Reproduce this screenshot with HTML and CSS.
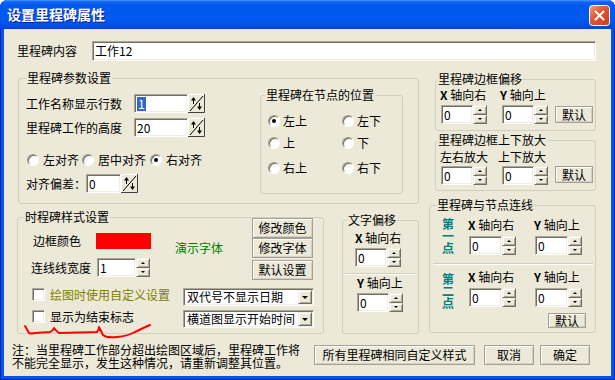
FILE: index.html
```html
<!DOCTYPE html>
<html lang="zh-CN">
<head>
    <meta charset="UTF-8">
    <meta name="viewport" content="width=device-width, initial-scale=1.0">
    <title>设置里程碑属性</title>
    <link rel="stylesheet" href="styles.css">
</head>
<body>
    <svg class="defs" width="0" height="0">
        <symbol id="bigspin" viewBox="0 0 17 19">
            <rect x="0" y="0" width="17" height="19" fill="#ece9d8"/>
            <path d="M0.5 18V0.5H16" fill="none" stroke="#fff"/>
            <path d="M16.5 0V18.5H0" fill="none" stroke="#404040"/>
            <path d="M2 17L15 2" stroke="#000" fill="none"/>
            <path d="M5.5 4V10" stroke="#000"/>
            <path d="M3 6.5L5.5 3L8 6.5Z" fill="#000"/>
            <path d="M11.5 9V15" stroke="#000"/>
            <path d="M9 12.5L11.5 16L14 12.5Z" fill="#000"/>
        </symbol>
    </svg>

    <div class="window">
        <div class="titlebar">
            <span class="title">设置里程碑属性</span>
            <svg class="close" width="21" height="21" viewBox="0 0 21 21">
                <defs>
                    <linearGradient id="closeGrad" x1="0" y1="0" x2="1" y2="1">
                        <stop offset="0" stop-color="#f1a287"/>
                        <stop offset="0.4" stop-color="#e05a35"/>
                        <stop offset="1" stop-color="#c53d17"/>
                    </linearGradient>
                </defs>
                <rect x="0.5" y="0.5" width="20" height="20" rx="3" fill="url(#closeGrad)" stroke="#fff"/>
                <path d="M6 6L15 15M15 6L6 15" stroke="#fff" stroke-width="2"/>
            </svg>
        </div>

        <div class="client">
            <div class="content-row">
                <span class="content-label">里程碑内容</span>
                <div class="field content-field">工作12</div>
            </div>

            <div class="main">
                <div class="col-left">
                    <div class="group g-params">
                        <div class="group-title">里程碑参数设置</div>
                        <div class="params-body">
                            <div class="params-form">
                                <div class="form-row first">
                                    <span class="lbl-lines">工作名称显示行数</span>
                                    <div class="field num-field"><span class="sel">1</span></div>
                                    <svg class="bigspin"><use href="#bigspin"/></svg>
                                </div>
                                <div class="form-row second">
                                    <span class="lbl-lines">里程碑工作的高度</span>
                                    <div class="field num-field">20</div>
                                    <svg class="bigspin"><use href="#bigspin"/></svg>
                                </div>
                                <div class="align-row">
                                    <span class="radio"></span><span class="opt">左对齐</span>
                                    <span class="radio r2"></span><span class="opt">居中对齐</span>
                                    <span class="radio r3 checked"></span><span class="opt">右对齐</span>
                                </div>
                                <div class="form-row offset">
                                    <span class="lbl-offset">对齐偏差：</span>
                                    <div class="field off-field">0</div>
                                    <svg class="bigspin"><use href="#bigspin"/></svg>
                                </div>
                            </div>

                            <div class="group g-pos">
                                <div class="group-title">里程碑在节点的位置</div>
                                <div class="pos-grid">
                                    <div class="pos"><span class="radio checked"></span>左上</div>
                                    <div class="pos"><span class="radio"></span>左下</div>
                                    <div class="pos"><span class="radio"></span>上</div>
                                    <div class="pos"><span class="radio"></span>下</div>
                                    <div class="pos"><span class="radio"></span>右上</div>
                                    <div class="pos"><span class="radio"></span>右下</div>
                                </div>
                            </div>
                        </div>
                    </div>

                    <div class="bottom-row">
                        <div class="group g-style">
                            <div class="group-title">时程碑样式设置</div>
                            <div class="style-top">
                                <div class="style-left">
                                    <div class="color-row">
                                        <span class="lbl-color">边框颜色</span>
                                        <span class="swatch"></span>
                                        <span class="demo-font">演示字体</span>
                                    </div>
                                    <div class="width-row">
                                        <span class="lbl-width">连线线宽度</span>
                                        <div class="field width-field">1</div>
                                        <span class="spin"><i></i><i></i></span>
                                    </div>
                                </div>
                                <div class="btn-col">
                                    <div class="btn">修改颜色</div>
                                    <div class="btn">修改字体</div>
                                    <div class="btn">默认设置</div>
                                </div>
                            </div>
                            <div class="check-row first">
                                <span class="check"></span>
                                <span class="check-label olive">绘图时使用自定义设置</span>
                                <div class="combo"><span>双代号不显示日期</span><i class="drop"></i></div>
                            </div>
                            <div class="check-row second">
                                <span class="check"></span>
                                <span class="check-label">显示为结束标志</span>
                                <div class="combo"><span>横道图显示开始时间</span><i class="drop"></i></div>
                            </div>
                        </div>

                        <div class="group g-text">
                            <div class="group-title">文字偏移</div>
                            <div class="axis"><b>X</b> 轴向右</div>
                            <div class="axis-input">
                                <div class="field small-field">0</div>
                                <span class="spin"><i></i><i></i></span>
                            </div>
                            <div class="sep"></div>
                            <div class="axis y"><b>Y</b> 轴向上</div>
                            <div class="axis-input y">
                                <div class="field small-field">0</div>
                                <span class="spin"><i></i><i></i></span>
                            </div>
                        </div>
                    </div>
                </div>

                <div class="col-right">
                    <div class="group g-border">
                        <div class="group-title">里程碑边框偏移</div>
                        <div class="pair-labels">
                            <span><b>X</b> 轴向右</span>
                            <span><b>Y</b> 轴向上</span>
                        </div>
                        <div class="pair-inputs">
                            <div class="field small-field">0</div>
                            <span class="spin"><i></i><i></i></span>
                            <div class="field small-field">0</div>
                            <span class="spin"><i></i><i></i></span>
                            <div class="btn btn-default">默认</div>
                        </div>
                    </div>

                    <div class="group g-scale">
                        <div class="group-title">里程碑边框上下放大</div>
                        <div class="pair-labels">
                            <span>左右放大</span>
                            <span>上下放大</span>
                        </div>
                        <div class="pair-inputs">
                            <div class="field small-field">0</div>
                            <span class="spin"><i></i><i></i></span>
                            <div class="field small-field">0</div>
                            <span class="spin"><i></i><i></i></span>
                            <div class="btn btn-default">默认</div>
                        </div>
                    </div>

                    <div class="group g-link">
                        <div class="group-title">里程碑与节点连线</div>
                        <div class="link-sec">
                            <div class="pt">第一点</div>
                            <div class="link-cols">
                                <div class="link-col">
                                    <div class="axis-label"><b>X</b> 轴向右</div>
                                    <div class="link-input">
                                        <div class="field small-field">0</div>
                                        <span class="spin"><i></i><i></i></span>
                                    </div>
                                </div>
                                <div class="link-col">
                                    <div class="axis-label"><b>Y</b> 轴向上</div>
                                    <div class="link-input">
                                        <div class="field small-field">0</div>
                                        <span class="spin"><i></i><i></i></span>
                                    </div>
                                </div>
                            </div>
                        </div>
                        <div class="sep"></div>
                        <div class="link-sec second">
                            <div class="pt">第二点</div>
                            <div class="link-cols">
                                <div class="link-col">
                                    <div class="axis-label"><b>X</b> 轴向右</div>
                                    <div class="link-input">
                                        <div class="field small-field">0</div>
                                        <span class="spin"><i></i><i></i></span>
                                    </div>
                                </div>
                                <div class="link-col">
                                    <div class="axis-label"><b>Y</b> 轴向上</div>
                                    <div class="link-input">
                                        <div class="field small-field">0</div>
                                        <span class="spin"><i></i><i></i></span>
                                    </div>
                                </div>
                            </div>
                        </div>
                        <div class="btn btn-default">默认</div>
                    </div>
                </div>
            </div>

            <div class="footer">
                <div class="note">
                    <span>注：当里程碑工作部分超出绘图区域后，里程碑工作将</span>
                    <span>不能完全显示，发生这种情况，请重新调整其位置。</span>
                </div>
                <div class="btn btn-all">所有里程碑相同自定义样式</div>
                <div class="btn btn-cancel">取消</div>
                <div class="btn btn-ok">确定</div>
            </div>
        </div>

        <!-- 手画的红色标记 -->
        <svg class="scribble" width="615" height="380" viewBox="0 0 615 380">
            <path d="M25 326L29 333Q31 334 35 333L50 332Q53 331 54 328Q56 331 59 333L97 332Q99 330 99 327Q101 331 103 335Q106 338 117 337Q128 336 135 332Q143 328 150 325"/>
        </svg>
    </div>
</body>
</html>
```

FILE: styles.css
```css
* {
    box-sizing: border-box;
}

body {
    margin: 0;
    background: #fff;
    font-family: "Noto Sans CJK SC", "Noto Sans", sans-serif;
    font-size: 12px;
    line-height: 14px;
    color: #000;
}

b {
    font-weight: bold;
}

.defs {
    position: absolute;
}

/* 窗口外框 */
.window {
    position: relative;
    width: 615px;
    height: 380px;
    display: flex;
    flex-direction: column;
    background: #0853e4;
    border-radius: 8px 8px 0 0;
    box-shadow: inset 1px 0 #0026b8, inset -1px 0 #0026b8, inset 0 -1px #0026b8;
}

.titlebar {
    height: 29px;
    display: flex;
    justify-content: space-between;
    padding: 0 5px 0 7px;
    border-radius: 7px 7px 0 0;
    background: linear-gradient(#4a97ff 0, #0f63f2 2px, #0058ee 6px, #005aef 18px, #0052e4 25px, #0043cf 29px);
}

.title {
    color: #fff;
    font-size: 14px;
    font-weight: bold;
    line-height: 29px;
    text-shadow: 1px 1px #0f1e8c;
}

.close {
    margin-top: 5px;
}

.client {
    flex: 1;
    margin: 0 4px 4px;
    background: #ece9d8;
}

/* 控件 */
.field {
    display: flex;
    align-items: center;
    padding: 0 2px;
    background: #fff;
    border: 1px solid;
    border-color: #aca899 #fff #fff #aca899;
    box-shadow: inset 1px 1px #716f64, inset -1px -1px #f1efe2;
}

.sel {
    background: #316ac5;
    color: #fff;
    padding: 0 1px;
}

.btn {
    display: flex;
    align-items: center;
    justify-content: center;
    background: #ece9d8;
    border: 1px solid #a5a192;
    box-shadow: inset 1px 1px #fff, inset -1px -1px #d4d0c8;
}

.bigspin {
    width: 17px;
    height: 19px;
    flex: none;
}

.spin {
    display: flex;
    flex-direction: column;
    width: 14px;
    height: 19px;
    flex: none;
}

.spin i {
    flex: 1;
    display: flex;
    align-items: center;
    justify-content: center;
    background: #ece9d8;
    border: 1px solid;
    border-color: #f1efe2 #716f64 #716f64 #f1efe2;
    box-shadow: inset 1px 1px #fff, inset -1px -1px #aca899;
}

.spin i::after {
    content: "";
    border-style: solid;
    border-color: transparent transparent #000;
    border-width: 0 2px 2px;
}

.spin i + i::after {
    border-color: #000 transparent transparent;
    border-width: 2px 2px 0;
}

.radio {
    width: 12px;
    height: 12px;
    flex: none;
    display: flex;
    align-items: center;
    justify-content: center;
    border-radius: 50%;
    background: #fff;
    border: 1px solid;
    border-color: #9d9a8a #fff #fff #9d9a8a;
    box-shadow: inset 1px 1px #716f64;
}

.radio.checked::after {
    content: "";
    width: 4px;
    height: 4px;
    border-radius: 50%;
    background: #000;
}

.check {
    width: 13px;
    height: 13px;
    flex: none;
    background: #fff;
    border: 1px solid;
    border-color: #aca899 #fff #fff #aca899;
    box-shadow: inset 1px 1px #716f64, inset -1px -1px #f1efe2;
}

.combo {
    display: flex;
    width: 131px;
    height: 18px;
    padding: 1px;
    background: #fff;
    border: 1px solid;
    border-color: #aca899 #fff #fff #aca899;
    box-shadow: inset 1px 1px #716f64, inset -1px -1px #f1efe2;
}

.combo span {
    flex: 1;
    padding-left: 2px;
    line-height: 14px;
    white-space: nowrap;
}

.drop {
    width: 14px;
    display: flex;
    align-items: center;
    justify-content: center;
    background: #ece9d8;
    border: 1px solid;
    border-color: #f1efe2 #716f64 #716f64 #f1efe2;
    box-shadow: inset 1px 1px #fff, inset -1px -1px #aca899;
}

.drop::after {
    content: "";
    border-style: solid;
    border-color: #000 transparent transparent;
    border-width: 3px 3px 0;
}

.sep {
    height: 2px;
    border-top: 1px solid #d0d0bf;
    border-bottom: 1px solid #fff;
}

/* 分组框 */
.group {
    border: 1px solid #d0d0bf;
    border-radius: 3px;
}

.group-title {
    width: fit-content;
    margin: -8px 0 -6px 6px;
    padding: 0 1px;
    background: #ece9d8;
}

/* 里程碑内容 */
.content-row {
    display: flex;
    align-items: center;
    height: 20px;
    margin: 12px 0 0 13px;
}

.content-label {
    width: 75px;
}

.content-field {
    width: 504px;
    height: 20px;
}

.main {
    display: flex;
    margin: 17px 0 0 13px;
}

.col-left {
    width: 402px;
}

.col-right {
    width: 167px;
    margin-left: 10px;
}

/* 里程碑参数设置 */
.g-params {
    width: 401px;
    height: 126px;
    margin-left: 1px;
}

.g-params > .group-title {
    margin-left: 7px;
}

.params-body {
    display: flex;
}

.params-form {
    width: 241px;
    padding-left: 7px;
}

.form-row {
    display: flex;
    align-items: center;
    height: 19px;
}

.form-row.first {
    margin-top: 15px;
}

.form-row.second {
    margin-top: 5px;
}

.form-row.offset {
    margin-top: 7px;
}

.lbl-lines {
    width: 108px;
}

.num-field {
    width: 54px;
    height: 19px;
}

.lbl-offset {
    width: 60px;
}

.off-field {
    width: 35px;
    height: 19px;
}

.align-row {
    display: flex;
    align-items: center;
    height: 14px;
    margin-top: 16px;
}

.align-row .radio {
    margin-left: 1px;
}

.align-row .opt {
    margin-left: 4px;
}

.align-row .r2 {
    margin-left: 3px;
}

.align-row .r3 {
    margin-left: 4px;
}

.g-pos {
    width: 143px;
    height: 99px;
    margin-top: 16px;
}

.g-pos > .group-title {
    margin-left: 4px;
}

.pos-grid {
    display: grid;
    grid-template-columns: 74px auto;
    grid-template-rows: 22px 25px 14px;
    margin: 18px 0 0 7px;
}

.pos {
    display: flex;
    align-items: center;
    gap: 3px;
    height: 14px;
}

/* 样式设置 */
.bottom-row {
    display: flex;
    align-items: flex-start;
    margin-top: 13px;
}

.g-style {
    width: 307px;
    height: 117px;
}

.style-top {
    display: flex;
    height: 62px;
}

.style-left {
    width: 234px;
}

.color-row {
    display: flex;
    align-items: flex-start;
    height: 16px;
    margin-top: 15px;
    padding-left: 15px;
}

.lbl-color {
    width: 63px;
    line-height: 16px;
}

.swatch {
    width: 55px;
    height: 16px;
    background: #f00;
}

.demo-font {
    margin: 8px 0 0 24px;
    color: #008000;
}

.width-row {
    display: flex;
    align-items: center;
    height: 19px;
    margin-top: 9px;
    padding-left: 13px;
}

.lbl-width {
    width: 66px;
}

.width-field {
    width: 39px;
    height: 19px;
}

.btn-col {
    display: flex;
    flex-direction: column;
    width: 61px;
}

.btn-col .btn {
    height: 20px;
}

.btn-col .btn:last-child {
    margin-top: 2px;
}

.check-row {
    display: flex;
    align-items: flex-start;
    height: 18px;
    padding-left: 14px;
}

.check-row.first {
    margin-top: 8px;
}

.check-row.second {
    margin-top: 4px;
}

.check-label {
    width: 133px;
    margin-left: 5px;
    line-height: 13px;
}

.olive {
    color: #808000;
}

/* 文字偏移 */
.g-text {
    width: 77px;
    height: 114px;
    margin: 3px 0 0 18px;
}

.g-text > .group-title {
    margin-left: 4px;
}

.small-field {
    width: 32px;
    height: 19px;
}

.axis {
    margin: 10px 0 0 12px;
}

.axis.y {
    margin: 1px 0 0 14px;
}

.axis-input {
    display: flex;
    margin: 3px 0 0 12px;
}

.axis-input.y {
    margin-left: 14px;
}

.g-text .sep {
    width: 72px;
    margin-top: 6px;
}

/* 右侧分组 */
.g-border {
    width: 161px;
    height: 52px;
    margin: 1px 0 0 6px;
}

.g-scale {
    width: 161px;
    height: 51px;
    margin: 9px 0 0 6px;
}

.g-border > .group-title,
.g-scale > .group-title {
    margin-left: 1px;
}

.pair-labels {
    display: flex;
    margin: 8px 0 0 4px;
}

.pair-labels span:first-child {
    width: 60px;
}

.g-scale .pair-labels {
    margin-top: 9px;
}

.g-scale .pair-labels span:first-child {
    width: 58px;
}

.pair-inputs {
    display: flex;
    align-items: flex-start;
    margin: 3px 0 0 5px;
}

.g-scale .pair-inputs {
    margin-top: 2px;
}

.pair-inputs .spin + .field {
    margin-left: 15px;
}

.pair-inputs .btn-default {
    width: 38px;
    height: 17px;
    margin: 1px 0 0 7px;
}

.g-scale .pair-inputs .btn-default {
    margin-top: 0;
}

.g-link {
    width: 167px;
    height: 128px;
    margin-top: 14px;
}

.link-sec {
    display: flex;
}

.pt {
    width: 12px;
    margin: 12px 0 0 12px;
    line-height: 12px;
    font-weight: bold;
    color: #008080;
}

.link-cols {
    display: flex;
    margin-left: 14px;
}

.link-col {
    width: 66px;
}

.axis-label {
    margin-top: 12px;
}

.link-input {
    display: flex;
    margin: 4px 0 0 1px;
}

.link-input .small-field {
    width: 33px;
}

.g-link .sep {
    width: 160px;
    margin: 8px 0 0 3px;
}

.link-sec.second .pt {
    margin-top: 8px;
}

.link-sec.second .axis-label {
    margin-top: 5px;
}

.g-link > .btn-default {
    width: 38px;
    height: 15px;
    margin: 4px 0 0 118px;
}

/* 底部 */
.footer {
    display: flex;
    align-items: flex-start;
    margin-top: 11px;
    padding-left: 8px;
}

.note {
    width: 302px;
    margin-top: -1px;
    white-space: nowrap;
}

.note span {
    display: block;
    height: 12px;
    line-height: 12px;
}

.note span + span {
    margin-top: 1px;
}

.footer .btn {
    height: 20px;
}

.btn-all {
    width: 161px;
}

.btn-cancel {
    width: 50px;
    margin-left: 9px;
}

.btn-ok {
    width: 50px;
    margin-left: 6px;
}

.scribble {
    position: absolute;
    left: 0;
    top: 0;
    pointer-events: none;
}

.scribble path {
    fill: none;
    stroke: #f00;
    stroke-width: 2;
    stroke-linecap: round;
    stroke-linejoin: round;
}
```
